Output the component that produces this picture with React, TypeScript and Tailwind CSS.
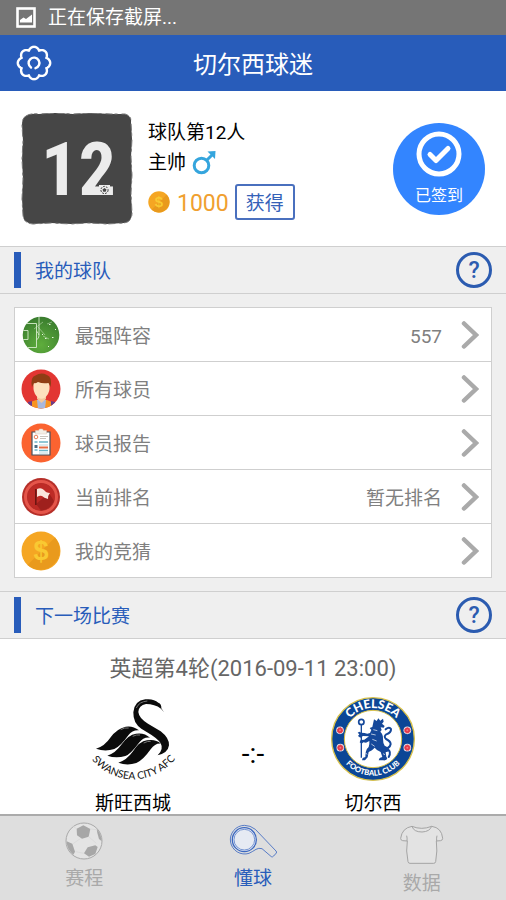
import React from 'react';

const gearPath = (() => {
  const points: string[] = [];
  for (let i = 0; i < 160; i++) {
    const a = (i / 160) * Math.PI * 2;
    const r = 13.3 + 2.9 * Math.pow(Math.abs(Math.cos(a * 4)), 0.85);
    points.push(`${(18 + r * Math.sin(a)).toFixed(2)} ${(18 - r * Math.cos(a)).toFixed(2)}`);
  }
  return `M${points.join('L')}Z`;
})();

const GearIcon = () => (
  <svg width="36" height="36" viewBox="0 0 36 36" fill="none" stroke="white" strokeWidth="2.4" strokeLinecap="round" strokeLinejoin="round">
    <path d={gearPath} />
    <path d="M15 22.5A5.400 5.400 0 1 1 19.500 23.200" strokeWidth="2.400" />
  </svg>
);

const PictureIcon = () => (
  <svg width="20" height="21" viewBox="0 0 20 21">
    <rect x="1.5" y="1.5" width="17" height="18" fill="none" stroke="white" strokeWidth="2.6" />
    <path d="M4 15.5V13l3.5-2.500 2.500 1.500L16 7.500v8z" fill="white" />
  </svg>
);

const Avatar = () => (
  <svg width="112" height="112" viewBox="0 0 112 112" className="shrink-0">
    <path
      d="M5 3Q9 0 18 1L34 0 52 1 70 0 90 1 104 1Q111 3 110 10L111 26 110 44 111 62 110 80 111 100Q111 109 103 110L86 111 68 110 50 111 30 110 12 111Q2 110 2 102L1 86 2 66 1 46 2 28 1 12Q1 5 5 3Z"
      fill="#464646"
      stroke="#777777"
      strokeWidth="1"
      strokeDasharray="7 2 3 4"
    />
    <text x="20" y="82" fill="#ececec" fontSize="74" fontWeight="700" fontFamily='"Liberation Sans Narrow", "Roboto Condensed", Roboto, sans-serif'>12</text>
    <path d="M78 72h11v10H78z" fill="#ececec" />
    <circle cx="83.500" cy="77" r="3.600" fill="none" stroke="#464646" strokeWidth="1" strokeDasharray="2 1" />
    <path d="M83.500 75l2 1.500-.8 2.300h-2.400l-.8-2.300z" fill="#464646" />
  </svg>
);

const MaleIcon = () => (
  <svg width="25" height="26" viewBox="0 0 25 26" fill="none" stroke="#35a5dd" strokeWidth="3">
    <circle cx="9.500" cy="15.500" r="7.300" />
    <path d="M14.500 10.500L20 5" />
    <path d="M15.500 1.500L23.500 1 23 9Z" fill="#35a5dd" stroke="none" />
  </svg>
);

const CoinIcon = ({ size }: { size: number }) => (
  <svg width={size} height={size} viewBox="0 0 40 40" className="shrink-0">
    <circle cx="20" cy="20" r="19.500" fill="#f5a623" />
    <path d="M34 6.500A19.500 19.500 0 0 1 6.500 34z" fill="#e99a1d" />
    <text x="20" y="29" textAnchor="middle" fill="#f9c932" fontSize="27" fontWeight="700" fontFamily='"Liberation Sans", sans-serif'>$</text>
  </svg>
);

const PitchIcon = () => (
  <svg width="40" height="40" viewBox="0 0 40 40">
    <defs>
      <radialGradient id="pitch" cx=".5" cy=".75" r=".75">
        <stop offset="0" stopColor="#5fae3c" />
        <stop offset="1" stopColor="#37792d" />
      </radialGradient>
      <clipPath id="pitchClip">
        <circle cx="20" cy="20" r="18.300" />
      </clipPath>
    </defs>
    <g clipPath="url(#pitchClip)">
      <path fill="url(#pitch)" d="M0 0h40v40H0z" />
      <g fill="none" stroke="#d6ebcb" strokeWidth=".9">
        <path d="M18 2v18M5 8.500h10.500v24H4M2 15.500h5v9H2M15.500 16q5 5 0 9" />
        <path d="M17 12l7 8M13 14l9-7M22 21l6 3M26 9l5-2" opacity=".55" />
      </g>
      <path d="M28 9h1.500v1H28zM24 23h1.500v1H24zM31 22h1.500v1H31zM34 14h1v1h-1zM27 31h1v1h-1zM21 19h1v1h-1z" fill="#e8f5e0" />
    </g>
  </svg>
);

const PlayerIcon = () => (
  <svg width="40" height="40" viewBox="0 0 40 40">
    <clipPath id="playerClip">
      <circle cx="20" cy="20" r="19.500" />
    </clipPath>
    <g clipPath="url(#playerClip)">
      <path fill="#e23632" d="M0 0h40v40H0z" />
      <path d="M7 40V34l8-3h11l7 3v6z" fill="#f79421" />
      <path d="M7 33l4-1v8H7zM30 32l4 1v7h-4z" fill="#6a3d8c" />
      <path d="M16 31h9l-1 9h-7z" fill="#a9b8dc" />
      <path d="M16 25h9v5l-4.500 4-4.500-4z" fill="#f2c79c" />
      <path d="M12.500 14Q20 10 28.500 14V20Q28 25 24 28.500q-3.500 2.500-7 0Q13 25 12.500 20z" fill="#fde0bd" />
      <path d="M11 18Q9 8 14.500 6.500 20 3 26 6q5.500 2 3.500 12l-2-4q-6 1-10.500-1-3 2-4 1z" fill="#8f3d14" />
    </g>
  </svg>
);

const ReportIcon = () => (
  <svg width="40" height="40" viewBox="0 0 40 40">
    <circle cx="20" cy="20" r="19.500" fill="#fb6330" />
    <path d="M11 9h18v23H11z" fill="#fff" stroke="#46505c" strokeWidth="1.200" />
    <path d="M14.500 7.500h3l1-1.500h3l1 1.500h3V11h-11z" fill="#f3eee6" stroke="#d8c6b8" strokeWidth=".5" />
    <circle cx="15" cy="14" r="1.800" fill="none" stroke="#e8805a" />
    <path d="M19 13.500h8M19 15.500h6" stroke="#c9c3bd" />
    <path d="M13.500 19h3M18 19h9M13.500 27h3M18 27.500h9" stroke="#6cb4c8" strokeWidth="1.400" />
    <path d="M13.500 22h3v3h-3z" fill="#4d6f86" />
    <path d="M18 22h9M18 30h9" stroke="#b9d6de" />
    <path d="M18 24.500h9" stroke="#e66b43" strokeWidth="2" />
  </svg>
);

const FlagIcon = () => (
  <svg width="40" height="40" viewBox="0 0 40 40">
    <circle cx="20" cy="20" r="19" fill="#b62f29" />
    <circle cx="20" cy="20" r="15.500" fill="none" stroke="#e5554a" strokeWidth="3" />
    <circle cx="20" cy="20" r="13.500" fill="#be2b26" />
    <path d="M15 27L28 16l5 8q-4 9-13 9.500z" fill="#9f201d" />
    <path d="M14.800 12v16" stroke="#6e1512" strokeWidth="1.600" />
    <path d="M16 12q4-2 7 1 2 3 6 3-2 2-2 6-4-1-6-3-2-1-5 1z" fill="#fbe6dc" />
  </svg>
);

const SwanseaCrest = () => (
  <svg width="86" height="86" viewBox="6 6 258 258" role="img" className="overflow-visible">
    <defs>
      <path id="swanArc" d="M-2 180Q54 256 138 256 220 254 276 178" />
    </defs>
    <path d="M219 44Q200 30 174 30 152 34 151 54 153 73 180 89L218 112Q244 132 243 154 240 177 209 184 228 166 218 148 209 133 176 114L160 104Q135 88 136 55 139 20 172 16 197 13 211 26 221 30 220 43L228 55Z" fill="#0b0b0b" />
    <path d="M145 42Q153 23 178 21" fill="none" stroke="#737373" strokeWidth="3" />
    <path d="M24 164Q49 158 68 130 86 104 113 98 134 94 153 109 134 107 121 124 97 158 79 165 51 174 24 164Z" fill="#0b0b0b" />
    <path d="M58 185Q82 178 101 151 121 122 144 119 169 115 186 131 167 128 153 146 128 180 112 186 84 194 58 185Z" fill="#0b0b0b" />
    <path d="M91 206Q116 199 135 172 154 142 177 139 202 134 219 149 202 147 188 166 164 200 145 207 117 216 91 206Z" fill="#0b0b0b" />
    <path d="M98 107q12-7 24-5M134 127q12-6 22-4M167 147q12-6 21-5" fill="none" stroke="#777" strokeWidth="3" />
    <text fill="#111" fontSize="31" fontFamily="Lato, sans-serif" textAnchor="middle">
      <textPath href="#swanArc" startOffset="50%">SWANSEA CITY AFC</textPath>
    </text>
  </svg>
);

const Rosette = ({ x, y }: { x: number; y: number }) => (
  <g>
    <circle cx={x} cy={y} r="11.500" fill="#e9dfe6" />
    <circle cx={x} cy={y} r="8" fill="#e4394a" stroke="#e4394a" strokeWidth="3" strokeDasharray="4 2" />
    <circle cx={x} cy={y} r="3" fill="#f07b80" />
  </g>
);

const ChelseaCrest = () => (
  <svg width="86" height="86" viewBox="5 7 258 258" role="img">
    <defs>
      <path id="chelseaTop" d="M41 136A93 93 0 0 1 227 136" />
      <path id="chelseaBottom" d="M24 136A110 110 0 0 0 244 136" />
    </defs>
    <circle cx="134" cy="136" r="124" fill="#0b4696" stroke="#d9c24c" strokeWidth="4" />
    <circle cx="134" cy="136" r="86" fill="#fff" stroke="#d9c24c" strokeWidth="3" />
    <text fill="#fff" fontSize="36" fontWeight="900" fontFamily="Lato, sans-serif" textAnchor="middle">
      <textPath href="#chelseaTop" startOffset="50%">CHELSEA</textPath>
    </text>
    <text fill="#fff" fontSize="23" fontWeight="900" fontFamily="Lato, sans-serif" textAnchor="middle">
      <textPath href="#chelseaBottom" startOffset="50%">FOOTBALL CLUB</textPath>
    </text>
    <Rosette x={35} y={110} />
    <Rosette x={36} y={162} />
    <Rosette x={237} y={110} />
    <Rosette x={237} y={162} />
    <g fill="#15489a">
      <path d="M137 77l8 5 5-8 6 7 8-6 2 9-5 6 8 7-3 5-9-1 3 8-4 5q9 8 8 22 0 13 5 20 14 5 13 17l-10 3 2 13 3 5q-1 7-12 6h-14l3-7 8-3-5-15q-11-4-18-13l-8 8-10 5-3 16-8 9H101l2-7 8-3 1-14q1-10 9-16 3-9 2-18l-10 5-8-1-5 4-6-4 3-7 11-1 14-10-18-1-8 5-7-5 4-5-5-5 5-3 6 3q10 0 18 3l8-2 4-9-5-6 8-3z" />
    </g>
    <path d="M163 168q22-4 24-17-1-9-14-15-8-7 1-14 15-5 14-16-5-8-16 1M178 166q12 9 3 24" fill="none" stroke="#15489a" strokeWidth="6" strokeLinecap="round" />
    <circle cx="99" cy="85" r="8" fill="none" stroke="#15489a" strokeWidth="5" />
    <path d="M99 92v100" stroke="#15489a" strokeWidth="4" />
    <path d="M135 108l12 3M128 121l14 3M132 137l13 5M129 151l10 7M111 178l6 4M164 180l6 3" stroke="#fff" strokeWidth="2" />
  </svg>
);

const BallIcon = () => (
  <svg width="38" height="38" viewBox="194 65 114 114">
    <circle cx="251" cy="122" r="54" fill="#e4e4e4" stroke="#a9a9a9" strokeWidth="3" />
    <g fill="#a7a7a7">
      <path d="M229 85l20-10 21 11-5 23-20 6-15-10z" />
      <path d="M289 86q14 14 15 37l-8-7-5-18z" />
      <path d="M199 123l17 7 8 24-5 9q-20-16-20-40z" />
      <path d="M262 141l23-6 7 5-7 21-19 8-15-10z" />
    </g>
    <path d="M229 85l-15-9M270 86l19 2M240 115l-22 15M265 109l23 20M226 154l24 5" stroke="#d6d6d6" strokeWidth="2" />
  </svg>
);

const WhistleIcon = () => (
  <svg width="48" height="38" viewBox="687 66 144 114" fill="none" stroke="#3c68c0" strokeLinejoin="round">
    <circle cx="733" cy="119" r="36" strokeWidth="4" fill="#e6eaf3" />
    <circle cx="733" cy="119" r="31" strokeWidth="2" />
    <path d="M766 88Q751 76 733 76A43 43 0 1 0 747 160Q759 154 768 148 776 143 786 146L814 170Q818 172 821 168L829 159Q831 156 828 153Z" strokeWidth="2.500" />
  </svg>
);

const ShirtIcon = () => (
  <svg width="45" height="41" viewBox="1199 75 135 123" fill="#e3e3e3" stroke="#a4a4a4" strokeWidth="3" strokeLinejoin="round">
    <path d="M1238 82Q1267 94 1297 82Q1327 86 1330 118Q1330 124 1324 125L1311 126Q1315 155 1309 188Q1308 193 1303 193H1232Q1227 193 1226 188Q1219 155 1224 126L1210 125Q1204 124 1204 118Q1208 87 1238 82Z" />
    <path d="M1238 82Q1243 99 1268 99 1291 98 1297 82" fill="none" />
    <path d="M1223 126q1-9-1-16M1312 126q-1-9 1-16" fill="none" />
  </svg>
);

const SectionHeader = ({ title }: { title: string }) => (
  <div className="flex h-12 items-center gap-[14px] border-y border-[#cfcfcf] bg-[#efefef] px-[14px]">
    <span className="h-9 w-[7px] bg-[#285cba]" />
    <h2 className="flex-1 pt-1 text-[19px] text-[#285cba]">{title}</h2>
    <button type="button" className="flex size-9 items-center justify-center rounded-full border-[3px] border-[#2b5bb0] text-[23px] leading-none font-medium text-[#2b5bb0]">
      ?
    </button>
  </div>
);

const rows = [
  { label: '最强阵容', value: '557', icon: <PitchIcon /> },
  { label: '所有球员', value: '', icon: <PlayerIcon /> },
  { label: '球员报告', value: '', icon: <ReportIcon /> },
  { label: '当前排名', value: '暂无排名', icon: <FlagIcon /> },
  { label: '我的竞猜', value: '', icon: <CoinIcon size={40} /> },
];

const tabs = [
  { label: '赛程', icon: <BallIcon />, style: 'pt-[6px] text-[#a9a9a9]' },
  { label: '懂球', icon: <WhistleIcon />, style: 'pt-[6px] text-[#285cba]' },
  { label: '数据', icon: <ShirtIcon />, style: 'pt-2 text-[#a9a9a9]' },
];

const App: React.FC = () => {
  return (
    <div className="flex min-h-screen flex-col bg-white font-[Roboto,'Noto_Sans_CJK_SC',sans-serif] text-[19px] leading-6">
      <div className="flex h-[35px] items-center gap-3 bg-[#757575] px-4 text-white">
        <PictureIcon />
        <span>正在保存截屏...</span>
      </div>

      <header className="grid h-14 grid-cols-[36px_1fr_36px] items-center bg-[#285cba] px-4 text-white">
        <button type="button" aria-label="设置">
          <GearIcon />
        </button>
        <h1 className="pt-1 text-center text-[24px]">切尔西球迷</h1>
      </header>

      <main className="flex flex-1 flex-col">
        <section className="flex h-[155px] items-center px-[21px]">
          <Avatar />
          <div className="ml-[15px] flex-1">
            <p className="leading-[30px]">球队第12人</p>
            <p className="flex items-center gap-[6px] leading-[30px]">
              主帅
              <MaleIcon />
            </p>
            <div className="mt-[6px] flex items-center">
              <CoinIcon size={22} />
              <span className="ml-[7px] pt-1 text-[23px] text-[#f0a030]">1000</span>
              <button type="button" className="ml-[6px] h-9 rounded-[3px] border-2 border-[#4a70be] px-[9px] pt-1 text-[#3562b8]">
                获得
              </button>
            </div>
          </div>
          <button type="button" className="flex size-[92px] flex-col items-center rounded-full bg-[#3385ff] pt-2 text-[16px] text-white">
            <svg width="46" height="46" viewBox="0 0 46 46" fill="none" stroke="white" strokeLinecap="round" strokeLinejoin="round">
              <circle cx="23" cy="23" r="20" strokeWidth="5" />
              <path d="M14 23.500l6 6L32 17.500" strokeWidth="5" />
            </svg>
            <span className="mt-[7px]">已签到</span>
          </button>
        </section>

        <SectionHeader title="我的球队" />
        <div className="bg-[#efefef] px-[14px] py-[13px]">
          <ul className="border-x border-b border-[#cfcfcf] bg-white text-[#808080]">
            {rows.map((row) => (
              <li key={row.label} className="border-t border-[#cfcfcf]">
                <button type="button" className="flex h-[53px] w-full items-center pr-3 pl-[6px] text-left">
                  {row.icon}
                  <span className="ml-[14px] flex-1 pt-1">{row.label}</span>
                  <span className="mr-[19px] pt-1">{row.value}</span>
                  <svg width="18" height="30" viewBox="0 0 18 30" fill="none" stroke="#aaaaaa" strokeWidth="4.500" strokeLinecap="round">
                    <path d="M3 3.500L15 15 3 26.500" />
                  </svg>
                </button>
              </li>
            ))}
          </ul>
        </div>

        <SectionHeader title="下一场比赛" />
        <section className="pt-4">
          <p className="text-center text-[22px] leading-7 text-[#666666]">英超第4轮(2016-09-11 23:00)</p>
          <div className="mx-auto mt-[13px] grid max-w-[360px] grid-cols-3 justify-items-center leading-5">
            <div className="flex flex-col items-center gap-3">
              <SwanseaCrest />
              <span>斯旺西城</span>
            </div>
            <span className="pt-12 text-[28px]">-:-</span>
            <div className="flex flex-col items-center gap-3">
              <ChelseaCrest />
              <span>切尔西</span>
            </div>
          </div>
        </section>
      </main>

      <nav className="grid h-[86px] grid-cols-3 border-t-2 border-[#ababab] bg-[#dedede]">
        {tabs.map((tab) => (
          <a key={tab.label} href="#" className={`flex flex-col items-center gap-[7px] ${tab.style}`}>
            {tab.icon}
            <span>{tab.label}</span>
          </a>
        ))}
      </nav>
    </div>
  );
};

export default App;
